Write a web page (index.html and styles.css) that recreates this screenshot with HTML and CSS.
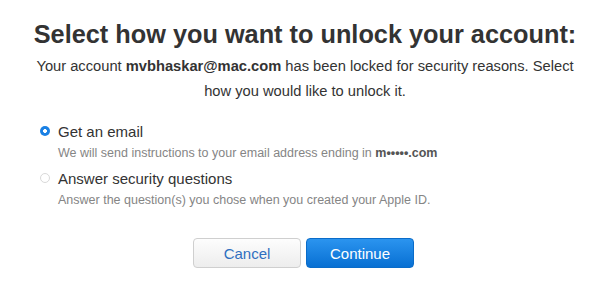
FILE: index.html
```html
<!DOCTYPE html>
<html>
<head>
<meta charset="utf-8">
<link rel="stylesheet" href="styles.css">
</head>
<body>
<div class="page">
  <h1 class="title">Select how you want to unlock your account:</h1>
  <p class="intro">Your account <span class="strong">mvbhaskar@mac.com</span> has been locked for security reasons. Select how you would like to unlock it.</p>
  <div class="options">
    <div class="option">
      <span class="radio radio-on"></span>
      <div class="option-text">
        <div class="option-label">Get an email</div>
        <div class="option-desc">We will send instructions to your email address ending in <span class="strong">m•••••.com</span></div>
      </div>
    </div>
    <div class="option">
      <span class="radio"></span>
      <div class="option-text">
        <div class="option-label">Answer security questions</div>
        <div class="option-desc">Answer the question(s) you chose when you created your Apple ID.</div>
      </div>
    </div>
  </div>
  <div class="actions">
    <button class="btn btn-cancel">Cancel</button>
    <button class="btn btn-continue">Continue</button>
  </div>
</div>
</body>
</html>
```
FILE: styles.css
```css
html, body {
  margin: 0;
  padding: 0;
  background: #ffffff;
}
body {
  font-family: "Liberation Sans", Arial, sans-serif;
  color: #333333;
}
.page {
  width: 600px;
  height: 296px;
  box-sizing: border-box;
  padding-top: 18px;
  padding-left: 10px;
}
.title {
  margin: 0;
  text-align: center;
  font-size: 25.3px;
  line-height: 32px;
  font-weight: 700;
  color: #333333;
}
.intro {
  margin: 4px auto 0;
  width: 550px;
  text-align: center;
  font-size: 14.7px;
  line-height: 25px;
  color: #333333;
}
.strong {
  font-weight: 700;
}
.options {
  margin: 18px 0 0 30px;
  display: flex;
  flex-direction: column;
  gap: 6px;
}
.option {
  display: flex;
  align-items: flex-start;
  gap: 8px;
}
.radio {
  margin-top: 4px;
  width: 10px;
  height: 10px;
  box-sizing: border-box;
  border-radius: 50%;
  border: 1px solid #d9d9d9;
  background: #ffffff;
  flex: none;
}
.radio-on {
  border: none;
  background: radial-gradient(circle, #ffffff 0 1.6px, #1a80e4 2.2px);
}
.option-label {
  font-size: 15px;
  line-height: 20px;
  color: #333333;
}
.option-desc {
  margin-top: 1px;
  font-size: 12.5px;
  line-height: 20px;
  color: #858585;
}
.option-desc .strong {
  color: #555555;
}
.actions {
  margin-top: 28px;
  display: flex;
  justify-content: center;
  gap: 5px;
  padding-right: 3px;
}
.btn {
  width: 108px;
  height: 30px;
  box-sizing: border-box;
  border-radius: 4px;
  font-family: "Liberation Sans", Arial, sans-serif;
  font-size: 15px;
  padding: 0;
}
.btn-cancel {
  background: linear-gradient(#fdfdfd, #ededed);
  border: 1px solid #cfcfcf;
  color: #2f6fc0;
}
.btn-continue {
  background: linear-gradient(#2b94ef, #0870d3);
  border: 1px solid #0a6cc9;
  color: #ffffff;
}
```
